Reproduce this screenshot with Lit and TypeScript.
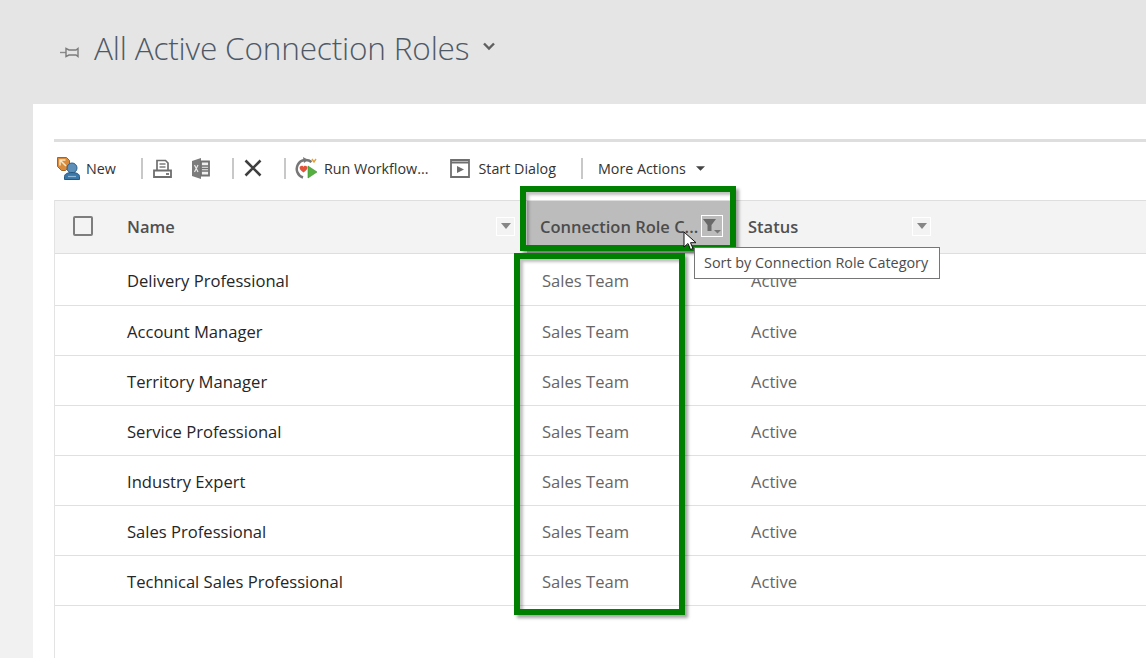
import { LitElement, html, css, svg } from 'lit';
import { customElement } from 'lit/decorators.js';

const ROLES = [
  'Delivery Professional',
  'Account Manager',
  'Territory Manager',
  'Service Professional',
  'Industry Expert',
  'Sales Professional',
  'Technical Sales Professional',
];

const pinIcon = svg`<path d="M0 10.500h6" stroke="#8a8a8a" stroke-width="1.400"/><path d="M6 6.500l3 1.500h7l2-1.500v8l-2-1.500H9l-3 1.500z" fill="none" stroke="#7c7c7c" stroke-width="1.400"/>`;

const newIcon = svg`
  <path d="M.5.5h9l3 3v6l-4 4h-4l-4-4z" fill="#d98a3a" stroke="#a8621f"/>
  <path d="M3 3l6 6M8.500 3H3v5.500" fill="none" stroke="#fbe6c4" stroke-width="1.500"/>
  <circle cx="15" cy="11" r="5" fill="#5d8fb8" stroke="#2a5f8c"/>
  <path d="M7.500 22.500v-3c0-2.500 3-4 7.500-4s7.500 1.500 7.500 4v3z" fill="#3a78aa" stroke="#265880"/>
  <path d="M11 19.500h8" stroke="#8fb8d8" stroke-width="1.200"/>
`;

const printIcon = svg`
  <path d="M4 10.500V1h8.500l2.500 2.500v7" fill="none" stroke="#6e6e6e" stroke-width="1.700"/>
  <path d="M6.500 4.500h6M6.500 7.500h6" stroke="#7c7c7c" stroke-width="1.400"/>
  <path d="M1 11h17v6.500H1z" fill="none" stroke="#6e6e6e" stroke-width="1.800"/>
  <path d="M13 14.500h3" stroke="#6e6e6e" stroke-width="1.800"/>
`;

const excelIcon = svg`
  <path d="M0 3L9 0v21l-9-3z" fill="#7c7c7c"/>
  <path d="M2.500 7l3.500 7M6 7l-3.500 7" stroke="#e8e8e8" stroke-width="1.200"/>
  <path d="M9 3.500h8v14H9z" fill="#efefef" stroke="#717171" stroke-width="1.800"/>
  <path d="M9.500 8h7M9.500 10.500h7M9.500 13h7" stroke="#717171" stroke-width="1.600"/>
`;

const closeIcon = svg`<path d="M1.500 1.500l15 15M16.500 1.500l-15 15" stroke="#3f3f3f" stroke-width="2.600" fill="none"/>`;

const workflowIcon = svg`
  <path d="M16.500 5A9 9 0 1 0 8 20.500" fill="none" stroke="#777" stroke-width="2.500"/>
  <path d="M8 0l5 3-4 3z" fill="#777"/>
  <path d="M5 9.500c1.500-1.500 3-.8 3.500.2.500-1 2-1.700 3.500-.2 1.200 1.500 0 3.500-3.500 6-3.500-2.500-4.700-4.500-3.500-6z" fill="#e2533b"/>
  <path d="M13 9l9 6-9 6z" fill="#56b040" stroke="#3d8f30" stroke-width=".6"/>
  <path d="M17 2l2 3 2-3" fill="none" stroke="#e2a23b" stroke-width="1.400"/>
`;

const dialogIcon = svg`
  <path d="M1 1h18v17H1z" fill="#fff" stroke="#6f6f6f" stroke-width="1.800"/>
  <path d="M1 3.500h18" stroke="#6f6f6f" stroke-width="2"/>
  <path d="M7 7l7 3.500-7 3.500z" fill="#6f6f6f"/>
`;

const filterIcon = svg`
  <path d="M0 0h13L8.500 6v6h-4V6z" fill="#696969"/>
  <path d="M11 11h7l-3.500 3.500z" fill="#767676"/>
`;

@customElement('app-root')
export class AppRoot extends LitElement {
  static styles = css`
    :host {
      display: block;
      position: relative;
      width: 1146px;
      height: 658px;
      overflow: hidden;
      background: #f1f1f1;
      font-family: 'Open Sans', 'Liberation Sans', sans-serif;
      color: #444;
    }

    .title-bar {
      height: 104px;
      box-sizing: border-box;
      background: #e5e5e5;
      display: flex;
      align-items: flex-start;
      padding: 27px 0 0 60px;
    }
    .pin { width: 20px; height: 20px; margin-top: 15px; margin-right: 14px; }
    .title {
      font-size: 31.6px;
      font-weight: 300;
      line-height: 42px;
      color: #4f5965;
      letter-spacing: -0.2px;
    }
    .caret { width: 12px; height: 9px; margin: 15px 0 0 14px; }

    .body { display: flex; height: 554px; }
    .rail { width: 33px; }
    .rail-top { height: 96px; background: #e5e5e5; }
    .main { flex: 1; background: #fff; padding: 35px 0 0 21px; display: flex; flex-direction: column; min-width: 0; }

    .toolbar {
      height: 52px;
      padding: 0 0 6px 3px;
      border-top: 3px solid #dedede;
      display: flex;
      align-items: center;
      font-size: 14.3px;
      color: #333;
    }
    .toolbar svg { flex: none; display: block; }
    .toolbar span { white-space: nowrap; }
    .sep { width: 2px; height: 21px; background: #c8c8c8; flex: none; }
    .m6 { margin-left: 6px; }
    .m8 { margin-left: 8px; }
    .m9 { margin-left: 9px; }
    .m10 { margin-left: 10px; }
    .m15 { margin-left: 15px; }
    .m20 { margin-left: 20px; }
    .m22 { margin-left: 22px; }
    .m25 { margin-left: 25px; }

    .grid { flex: 1; border-left: 1px solid #e3e3e3; }
    .cols { display: grid; grid-template-columns: 472px 203px 1fr; }
    .head {
      height: 54px;
      box-sizing: border-box;
      background: #f3f3f3;
      border-top: 1px solid #dedede;
      border-bottom: 1px solid #dedede;
      font-size: 16.5px;
      font-weight: 600;
      color: #505050;
    }
    .head > div { display: flex; align-items: center; box-sizing: border-box; padding-bottom: 2px; }
    .name-head { padding-left: 18px; }
    .check { width: 16px; height: 16px; border: 2px solid #7d7d7d; border-radius: 2px; background: #f3f3f3; margin-right: 34px; flex: none; }
    .sort {
      width: 19px;
      height: 19px;
      box-sizing: border-box;
      border: 1px solid #fff;
      display: flex;
      align-items: center;
      justify-content: center;
      margin-left: auto;
      flex: none;
    }
    .sort::after {
      content: '';
      border-left: 5px solid transparent;
      border-right: 5px solid transparent;
      border-top: 6px solid #868686;
    }
    .name-head .sort { margin-right: 12px; }
    .conn-head { background: #bcbcbc; color: #4c4c4c; padding-left: 13px; height: 52px; }
    .conn-head .filter {
      width: 22px;
      height: 22px;
      box-sizing: border-box;
      border: 1px solid #fff;
      margin-left: auto;
      margin-right: 7px;
      display: flex;
      align-items: center;
      justify-content: center;
      flex: none;
    }
    .status-head { padding-left: 18px; width: 201px; }

    .row { height: 50px; box-sizing: border-box; border-bottom: 1px solid #e0e0e0; font-size: 16.6px; align-items: center; }
    .row.first { height: 52px; }
    .row > div { padding-top: 1px; }
    .row .name { padding-left: 72px; color: #262626; }
    .row .cat { padding-left: 15px; color: #666; }
    .row .status { padding-left: 21px; color: #666; }

    .mark {
      position: absolute;
      box-sizing: border-box;
      border: 6px solid #008000;
      box-shadow: 3px 3px 3px rgba(0, 0, 0, 0.35), inset 3px 3px 3px rgba(0, 0, 0, 0.25);
    }
    .mark.head-mark { left: 520px; top: 186px; width: 216px; height: 65px; }
    .mark.cell-mark { left: 514px; top: 253px; width: 171px; height: 362px; }

    .tooltip {
      position: absolute;
      left: 694px;
      top: 247px;
      width: 246px;
      height: 32px;
      box-sizing: border-box;
      background: #fff;
      border: 1px solid #767676;
      font-size: 14.4px;
      color: #4c4c4c;
      line-height: 30px;
      padding-left: 9px;
      white-space: nowrap;
    }
    .cursor { position: absolute; left: 683px; top: 231px; width: 14px; height: 20px; }
  `;

  render() {
    return html`
      <div class="title-bar">
        <svg class="pin" viewBox="0 0 20 20">${pinIcon}</svg>
        <div class="title">All Active Connection Roles</div>
        <svg class="caret" viewBox="0 0 12 9"><path d="M1 1.500l5 5 5-5" fill="none" stroke="#5f5f5f" stroke-width="2.400"/></svg>
      </div>
      <div class="body">
        <div class="rail"><div class="rail-top"></div></div>
        <div class="main">
          <div class="toolbar">
            <svg width="23" height="23" viewBox="0 0 23 23">${newIcon}</svg>
            <span class="m6">New</span>
            <div class="sep m25"></div>
            <svg class="m10" width="19" height="19" viewBox="0 0 19 18">${printIcon}</svg>
            <svg class="m20" width="18" height="21" viewBox="0 0 18 21">${excelIcon}</svg>
            <div class="sep m22"></div>
            <svg class="m10" width="18" height="18" viewBox="0 0 18 18">${closeIcon}</svg>
            <div class="sep m22"></div>
            <svg class="m9" width="23" height="22" viewBox="0 0 23 22">${workflowIcon}</svg>
            <span class="m6">Run Workflow...</span>
            <svg class="m22" width="20" height="19" viewBox="0 0 20 19">${dialogIcon}</svg>
            <span class="m8">Start Dialog</span>
            <div class="sep m25"></div>
            <span class="m15">More Actions</span>
            <svg class="m10" width="9" height="5" viewBox="0 0 10 5"><path d="M0 0h10L5 5z" fill="#444"/></svg>
          </div>
          <div class="grid">
            <div class="cols head">
              <div class="name-head">
                <span class="check"></span>
                <span>Name</span>
                <span class="sort"></span>
              </div>
              <div class="conn-head">
                <span>Connection Role C...</span>
                <span class="filter"><svg width="18" height="15" viewBox="0 0 18 15">${filterIcon}</svg></span>
              </div>
              <div class="status-head">
                <span>Status</span>
                <span class="sort"></span>
              </div>
            </div>
            ${ROLES.map(
              (role, i) => html`
                <div class="cols row ${i === 0 ? 'first' : ''}">
                  <div class="name">${role}</div>
                  <div class="cat">Sales Team</div>
                  <div class="status">Active</div>
                </div>
              `
            )}
          </div>
        </div>
      </div>
      <div class="mark head-mark"></div>
      <div class="mark cell-mark"></div>
      <div class="tooltip">Sort by Connection Role Category</div>
      <svg class="cursor" viewBox="0 0 14 20"><path d="M1 1v15l4-3.500 2.500 6 2.500-1-2.500-5.800H13z" fill="#fff" stroke="#111" stroke-width="1"/></svg>
    `;
  }
}
